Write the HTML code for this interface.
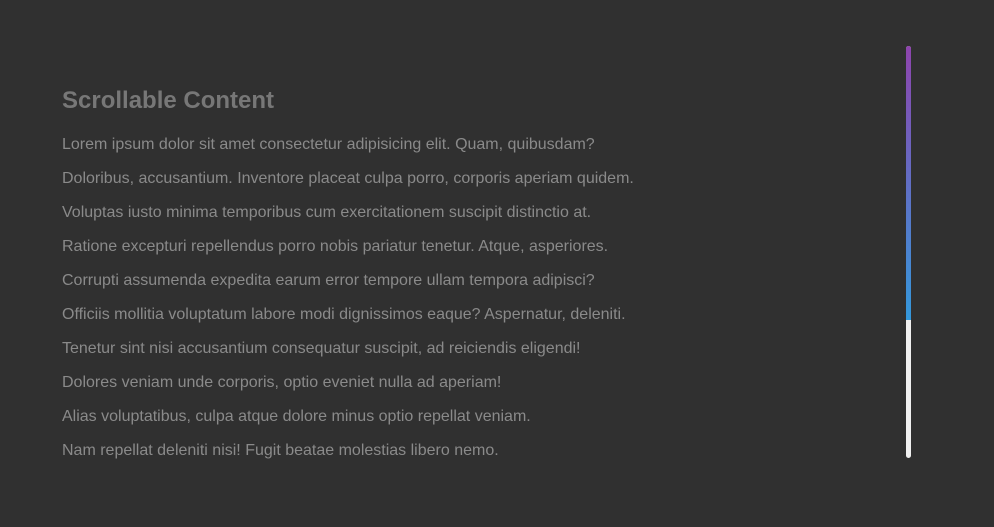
<!DOCTYPE html>
<html><head><style>
html,body{margin:0;padding:0;background:#303030;width:994px;height:527px;overflow:hidden;font-family:"Liberation Sans",Arial,sans-serif;}
h2{position:absolute;left:62px;top:87px;margin:0;font-size:24px;line-height:28px;font-weight:bold;color:#777;}
.c{position:absolute;left:62px;top:128px;}
.c p{margin:0;font-size:16px;line-height:34px;color:#8a8a8a;white-space:nowrap;}
.track{position:absolute;left:906px;top:46px;width:5px;height:412px;background:#f0f0f0;border-radius:3px;}
.thumb{position:absolute;left:906px;top:46px;width:5px;height:274px;background:linear-gradient(#8e44ad,#3498db);border-radius:3px 3px 0 0;}
</style></head><body>
<h2>Scrollable Content</h2>
<div class="c">
<p>Lorem ipsum dolor sit amet consectetur adipisicing elit. Quam, quibusdam?</p>
<p>Doloribus, accusantium. Inventore placeat culpa porro, corporis aperiam quidem.</p>
<p>Voluptas iusto minima temporibus cum exercitationem suscipit distinctio at.</p>
<p>Ratione excepturi repellendus porro nobis pariatur tenetur. Atque, asperiores.</p>
<p>Corrupti assumenda expedita earum error tempore ullam tempora adipisci?</p>
<p>Officiis mollitia voluptatum labore modi dignissimos eaque? Aspernatur, deleniti.</p>
<p>Tenetur sint nisi accusantium consequatur suscipit, ad reiciendis eligendi!</p>
<p>Dolores veniam unde corporis, optio eveniet nulla ad aperiam!</p>
<p>Alias voluptatibus, culpa atque dolore minus optio repellat veniam.</p>
<p>Nam repellat deleniti nisi! Fugit beatae molestias libero nemo.</p>
</div>
<div class="track"></div>
<div class="thumb"></div>
</body></html>
